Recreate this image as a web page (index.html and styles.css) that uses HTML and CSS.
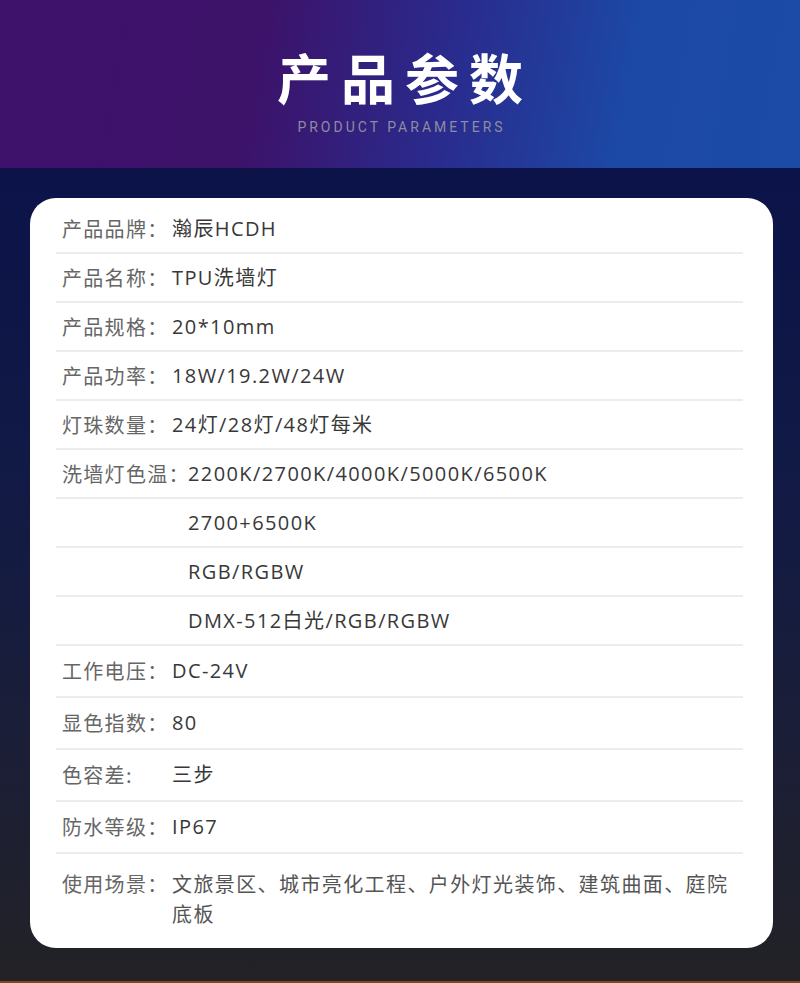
FILE: index.html
```html
<!DOCTYPE html>
<html lang="zh-CN">
<head>
    <meta charset="UTF-8">
    <meta name="viewport" content="width=device-width, initial-scale=1.0">
    <title>产品参数 - TPU洗墙灯</title>
    <link rel="stylesheet" href="styles.css">
</head>
<body>
    <header class="banner">
        <h1>产品参数</h1>
        <p>PRODUCT PARAMETERS</p>
    </header>

    <main class="main">
        <section class="card">
            <div class="row"><span class="label">产品品牌：</span><span class="value">瀚辰HCDH</span></div>
            <div class="row"><span class="label">产品名称：</span><span class="value">TPU洗墙灯</span></div>
            <div class="row"><span class="label">产品规格：</span><span class="value">20*10mm</span></div>
            <div class="row"><span class="label">产品功率：</span><span class="value">18W/19.2W/24W</span></div>
            <div class="row"><span class="label">灯珠数量：</span><span class="value">24灯/28灯/48灯每米</span></div>
            <!-- colour temperature spans several lines -->
            <div class="row"><span class="label wide">洗墙灯色温：</span><span class="value">2200K/2700K/4000K/5000K/6500K</span></div>
            <div class="row"><span class="label wide"></span><span class="value">2700+6500K</span></div>
            <div class="row"><span class="label wide"></span><span class="value">RGB/RGBW</span></div>
            <div class="row"><span class="label wide"></span><span class="value">DMX-512白光/RGB/RGBW</span></div>
            <div class="row tall"><span class="label">工作电压：</span><span class="value">DC-24V</span></div>
            <div class="row tall"><span class="label">显色指数：</span><span class="value">80</span></div>
            <div class="row tall"><span class="label">色容差:</span><span class="value">三步</span></div>
            <div class="row tall"><span class="label">防水等级：</span><span class="value">IP67</span></div>
            <div class="row last"><span class="label">使用场景：</span><span class="value light">文旅景区、城市亮化工程、户外灯光装饰、建筑曲面、庭院底板</span></div>
        </section>
    </main>
    <div class="strip"></div>
</body>
</html>
```

FILE: styles.css
```css
body {
    margin: 0;
    font-family: "Open Sans", "Noto Sans CJK SC", sans-serif;
    background-color: #161a38;
}

.banner {
    height: 168px;
    box-sizing: border-box;
    padding-top: 47px;
    text-align: center;
    background: linear-gradient(100deg, #3e116a 0%, #3d1269 32%, #2a2a8c 55%, #1c49a6 78%, #1b4ba6 100%);
}

.banner h1 {
    margin: 0;
    font-family: "Noto Sans CJK SC", sans-serif;
    font-size: 54px;
    line-height: 60px;
    font-weight: 700;
    letter-spacing: 10px;
    padding-left: 10px; /* balance the trailing letter-spacing */
    color: #ffffff;
}

.banner p {
    margin: 12px 0 0;
    font-family: Roboto, "Liberation Sans", sans-serif;
    font-size: 14px;
    line-height: 16px;
    letter-spacing: 3px;
    padding-left: 3px;
    color: #8f8ba0;
}

.main {
    padding: 30px 27px 33px 30px;
    background: linear-gradient(180deg, #0b1349 0%, #121a45 40%, #1c1f35 75%, #222226 100%);
}

.card {
    background-color: #ffffff;
    border-radius: 26px;
    padding: 7px 30px 0 26px;
    min-height: 743px;
}

.row {
    display: flex;
    align-items: center;
    height: 49px;
    box-sizing: border-box;
    padding-left: 6px;
    border-bottom: 2px solid #ececec;
}

.row.tall {
    height: 52px;
}

.row.last {
    height: auto;
    align-items: flex-start;
    padding-top: 15px;
    padding-bottom: 19px;
    border-bottom: none;
}

.label {
    flex: none;
    width: 110px;
    font-family: "Noto Sans CJK SC", sans-serif;
    font-size: 20px;
    line-height: 30px;
    letter-spacing: 1.3px;
    white-space: nowrap;
    color: #666666;
}

.label.wide {
    width: 126px;
}

.value {
    font-size: 20px;
    line-height: 30px;
    letter-spacing: 1.4px;
    color: #383838;
}

.value.light {
    font-family: "Noto Sans CJK SC", sans-serif;
    color: #555555;
}

.strip {
    height: 2px;
    background-color: #7a4a22;
}
```
